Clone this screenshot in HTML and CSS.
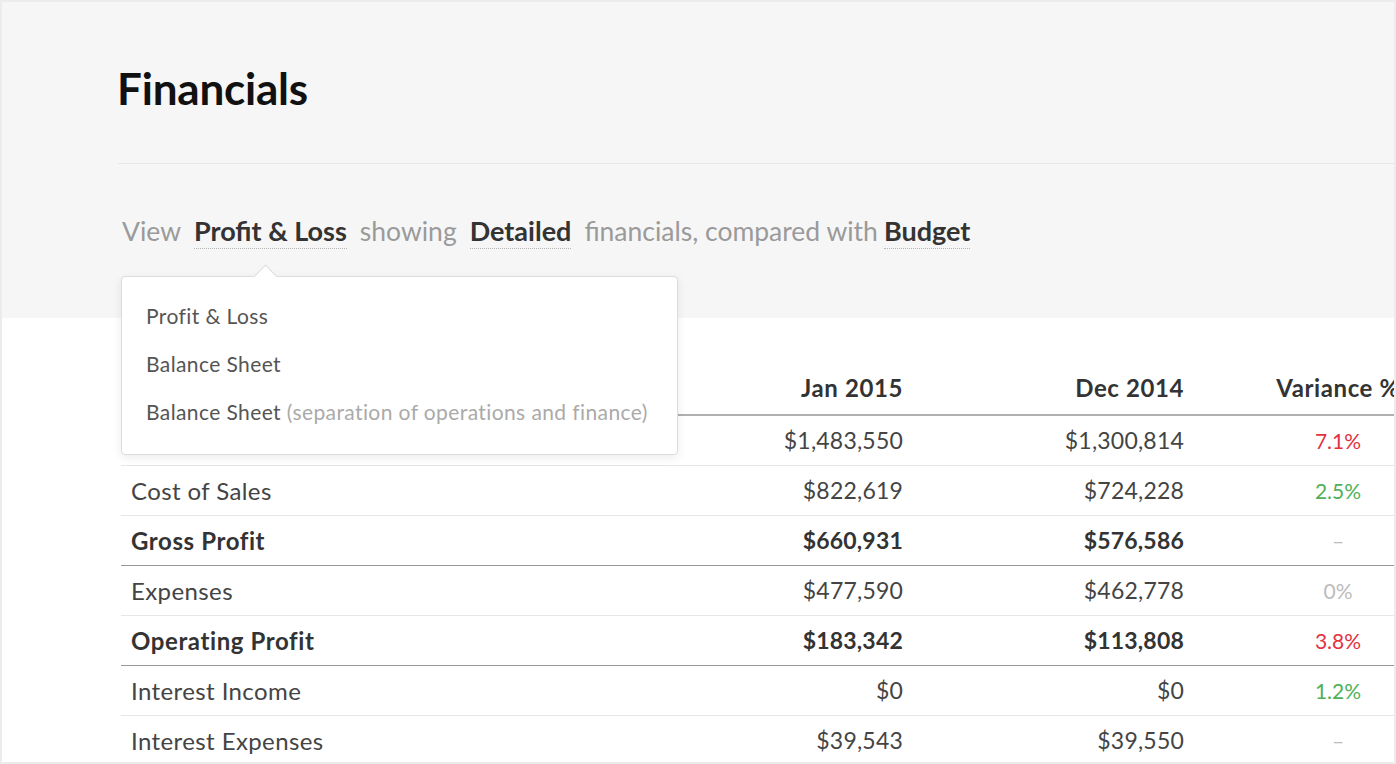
FILE: index.html
```html
<!DOCTYPE html>
<html>
<head>
<meta charset="utf-8">
<link rel="stylesheet" href="styles.css">
</head>
<body>
<div class="frame">
  <header class="header">
    <h1 class="title">Financials</h1>
    <div class="rule"></div>
    <p class="view-line">
      <span class="muted">View</span>
      <span class="pick">Profit &amp; Loss</span>
      <span class="muted">showing</span>
      <span class="pick">Detailed</span>
      <span class="muted">financials, compared with</span>
      <span class="pick pick-tight">Budget</span>
    </p>
  </header>

  <section class="report">
    <table class="fin-table">
      <colgroup>
        <col class="c-label"><col class="c-jan"><col class="c-dec"><col class="c-var">
      </colgroup>
      <thead>
        <tr><th></th><th class="num">Jan 2015</th><th class="num">Dec 2014</th><th class="var">Variance %</th></tr>
      </thead>
      <tbody>
        <tr><td class="label">Revenue</td><td class="num">$1,483,550</td><td class="num">$1,300,814</td><td class="var red">7.1%</td></tr>
        <tr><td class="label">Cost of Sales</td><td class="num">$822,619</td><td class="num">$724,228</td><td class="var green">2.5%</td></tr>
        <tr class="total"><td class="label">Gross Profit</td><td class="num">$660,931</td><td class="num">$576,586</td><td class="var grey">–</td></tr>
        <tr><td class="label">Expenses</td><td class="num">$477,590</td><td class="num">$462,778</td><td class="var grey">0%</td></tr>
        <tr class="total"><td class="label">Operating Profit</td><td class="num">$183,342</td><td class="num">$113,808</td><td class="var red">3.8%</td></tr>
        <tr><td class="label">Interest Income</td><td class="num">$0</td><td class="num">$0</td><td class="var green">1.2%</td></tr>
        <tr><td class="label">Interest Expenses</td><td class="num">$39,543</td><td class="num">$39,550</td><td class="var grey">–</td></tr>
      </tbody>
    </table>
  </section>

  <div class="menu">
    <ul class="menu-list">
      <li>Profit &amp; Loss</li>
      <li>Balance Sheet</li>
      <li>Balance Sheet <span class="hint">(separation of operations and finance)</span></li>
    </ul>
  </div>
</div>
</body>
</html>
```

FILE: styles.css
```css
* { box-sizing: border-box; }
html, body { margin: 0; padding: 0; background: #fff; }
body { font-family: Lato, "Open Sans", sans-serif; }

.frame {
  position: relative;
  width: 1396px;
  height: 764px;
  border: 2px solid #ececec;
  overflow: hidden;
  background: #fff;
}

.header {
  background: #f6f6f6;
  height: 316px;
  padding-top: 58px;
}

.title {
  margin: 0 0 0 115px;
  font-size: 44px;
  line-height: 56px;
  font-weight: 700;
  color: #111;
  letter-spacing: -0.2px;
}

.rule {
  margin: 47px 0 0 116px;
  border-top: 1px solid #e6e6e6;
}

.view-line {
  margin: 50px 0 0 120px;
  font-size: 27px;
  line-height: 34px;
  color: #999;
  display: flex;
  align-items: baseline;
  gap: 13px;
}

.muted { color: #9a9a9a; font-size: 26.5px; }
.pick {
  color: #333;
  font-weight: 700;
  border-bottom: 1px dotted #b5b5b5;
}
.pick-tight { margin-left: -7px; }

.report {
  padding-left: 119px;
}

.fin-table {
  border-collapse: collapse;
  table-layout: fixed;
  width: 1361px;
  color: #444;
  font-size: 23px;
}
.c-label { width: 492px; }
.c-jan { width: 300px; }
.c-dec { width: 281px; }
.c-var { width: 288px; }

.fin-table th {
  height: 97px;
  vertical-align: bottom;
  padding: 0 10px 12px;
  font-weight: 700;
  color: #333;
  font-size: 24px;
  letter-spacing: 0.6px;
  border-bottom: 2px solid #b0b0b0;
}
.fin-table td {
  height: 50px;
  padding: 0 10px;
  border-bottom: 1px solid #e6e6e6;
}
.fin-table td.label { font-size: 24px; letter-spacing: 0.4px; }
.fin-table .num { text-align: right; letter-spacing: 0.2px; }
.fin-table th.num { letter-spacing: 0.6px; }
.fin-table td.var { text-align: center; font-size: 21px; }
.fin-table th.var { text-align: center; }
.fin-table tr.total td { font-weight: 700; color: #333; border-bottom-color: #999; }
.fin-table tr.total td.label { letter-spacing: 0.6px; }
.fin-table tr.total td.var { font-weight: 400; }

.fin-table td.var.red { color: #e2323f; }
.fin-table td.var.green { color: #4fb058; }
.fin-table td.var.grey { color: #bcbcbc; }

.menu {
  position: absolute;
  left: 119px;
  top: 274px;
  width: 557px;
  height: 179px;
  background: #fff;
  border: 1px solid #dcdcdc;
  border-radius: 4px;
  box-shadow: 0 3px 10px rgba(0, 0, 0, 0.08);
}
.menu::before {
  content: "";
  position: absolute;
  left: 135px;
  top: -9px;
  width: 16px;
  height: 16px;
  background: #fff;
  border-left: 1px solid #dcdcdc;
  border-top: 1px solid #dcdcdc;
  transform: rotate(45deg);
}
.menu-list {
  list-style: none;
  margin: 0;
  padding: 15px 0 0 24px;
  font-size: 21px;
  line-height: 48px;
  letter-spacing: 0.4px;
  color: #555;
}
.hint { color: #aaa; }
```
